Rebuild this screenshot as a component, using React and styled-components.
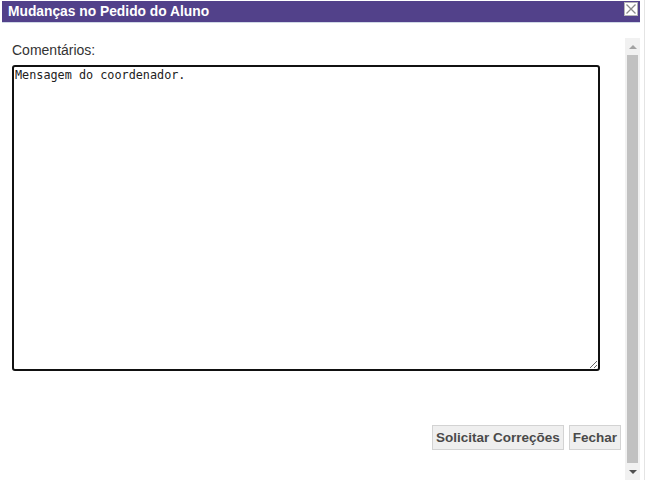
import React, { useState } from 'react';
import styled, { createGlobalStyle } from 'styled-components';

const GlobalStyle = createGlobalStyle`
  html, body {
    margin: 0;
    padding: 0;
    background: #fff;
    font-family: "Liberation Sans", Arial, sans-serif;
  }
`;

const Dialog = styled.div`
  width: 645px;
  height: 480px;
  box-sizing: border-box;
  padding: 1px 4px 0 2px;
  display: flex;
  flex-direction: column;
  background: #fff;
  border-right: 1px solid #e4e4e4;
`;

const TitleBar = styled.div`
  height: 21px;
  flex-shrink: 0;
  background: #52418a;
  border-bottom: 1px solid #cfd8e6;
  display: flex;
  align-items: center;
  justify-content: space-between;
  padding: 0 2px 0 6px;
`;

const Title = styled.span`
  color: #fff;
  font-weight: bold;
  font-size: 13.8px;
  line-height: 21px;
`;

const CloseButton = styled.button`
  width: 14px;
  height: 14px;
  margin-top: -5px;
  padding: 0;
  border: 1px solid #b5b5b5;
  background: #fff;
  display: flex;
  align-items: center;
  justify-content: center;
  cursor: pointer;
`;

const Body = styled.div`
  flex: 1;
  display: flex;
  min-height: 0;
`;

const Content = styled.div`
  flex: 1;
  display: flex;
  flex-direction: column;
  padding: 19px 0 0 10px;
`;

const Label = styled.label`
  font-size: 14px;
  color: #333;
  line-height: 17px;
  margin-bottom: 6px;
`;

const Comments = styled.textarea`
  width: 588px;
  height: 306px;
  box-sizing: border-box;
  border: 2px solid #111;
  border-radius: 3px;
  padding: 1px 1px;
  font-family: "DejaVu Sans Mono", "Liberation Mono", monospace;
  font-size: 11.8px;
  line-height: 15px;
  color: #222;
  resize: both;
  outline: none;
`;

const Actions = styled.div`
  display: flex;
  justify-content: flex-end;
  gap: 5px;
  margin-top: 54px;
  padding-right: 4px;
`;

const Button = styled.button`
  height: 25px;
  padding: 0 3px;
  border: 1px solid #d3d3d3;
  background: #efefef;
  color: #4a4a4a;
  font-family: "Liberation Sans", Arial, sans-serif;
  font-weight: bold;
  font-size: 13.5px;
  cursor: pointer;
`;

const Scrollbar = styled.div`
  width: 15px;
  margin-top: 15px;
  display: flex;
  flex-direction: column;
  background: #f1f1f1;
`;

const Arrow = styled.div`
  height: 17px;
  flex-shrink: 0;
  display: flex;
  align-items: center;
  justify-content: center;
  &::after {
    content: '';
    width: 0;
    height: 0;
    border-left: 4px solid transparent;
    border-right: 4px solid transparent;
    ${p => (p.down ? 'border-top: 4px solid #505050;' : 'border-bottom: 4px solid #a3a3a3;')}
  }
`;

const Thumb = styled.div`
  flex: 1;
  margin: 0 2px;
  background: #c1c1c1;
`;

export default function App() {
  const [text, setText] = useState('Mensagem do coordenador.');

  return (
    <>
      <GlobalStyle />
      <Dialog>
        <TitleBar>
          <Title>Mudanças no Pedido do Aluno</Title>
          <CloseButton aria-label="Fechar">
            <svg width="12" height="12" viewBox="0 0 12 12">
              <path d="M1.5 1.5 L10.5 10.5 M10.5 1.5 L1.5 10.5" stroke="#8a8a8a" strokeWidth="1.3" />
            </svg>
          </CloseButton>
        </TitleBar>
        <Body>
          <Content>
            <Label>Comentários:</Label>
            <Comments value={text} onChange={e => setText(e.target.value)} />
            <Actions>
              <Button>Solicitar Correções</Button>
              <Button>Fechar</Button>
            </Actions>
          </Content>
          <Scrollbar>
            <Arrow />
            <Thumb />
            <Arrow down />
          </Scrollbar>
        </Body>
      </Dialog>
    </>
  );
}
